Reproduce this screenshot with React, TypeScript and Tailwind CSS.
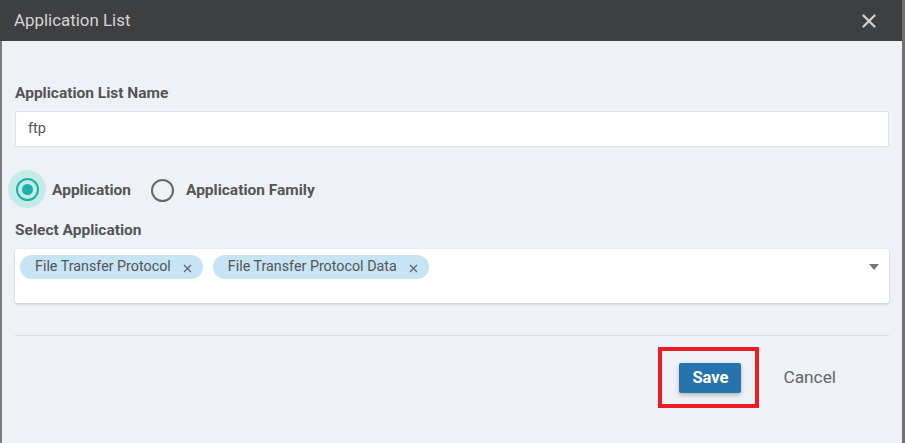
import { X } from "lucide-react";

const chips = ["File Transfer Protocol", "File Transfer Protocol Data"];

function Chip({ label }: { label: string }) {
  return (
    <span className="flex h-[24px] items-center rounded-full bg-[#c7e4f4] pl-[15px] pr-[11px] text-[14.3px] text-[#555]">
      {label}
      <svg width="9" height="9" viewBox="0 0 9 9" className="ml-[12px] mt-[2px]">
        <path d="M1 1L8 8M8 1L1 8" stroke="#666" strokeWidth="1.3" />
      </svg>
    </span>
  );
}

export default function App() {
  return (
    <div className="flex h-[443px] w-[905px] overflow-hidden font-['Roboto','Liberation_Sans',sans-serif]">
      <div className="flex flex-1 flex-col">
        {/* header */}
        <div className="flex h-[41px] items-center justify-between bg-[#3e3f41] pl-[14px] pr-[22px]">
          <span className="text-[16.9px] text-[#d4d4d4]">Application List</span>
          <X size={22} strokeWidth={2.6} className="text-[#cfcfcf]" />
        </div>

        {/* body */}
        <div className="flex-1 border-l-2 border-[#7b7b7b] bg-[#eef1f6] pl-[13px] pr-[13px] pt-[42px]">
          <div className="h-[20px] text-[15.5px] leading-[20px] font-bold text-[#555]">Application List Name</div>
          <div className="mt-[8px] flex h-[36px] items-center rounded-[2px] border border-[#dde0e4] bg-white pl-[12px] text-[14.5px] text-[#555]">
            ftp
          </div>

          {/* radios */}
          <div className="ml-[-7px] mt-[23px] flex h-[38px] items-center">
            <div className="flex h-[38px] w-[38px] items-center justify-center rounded-full bg-[#c5ebe8]">
              <div className="flex h-[23px] w-[23px] items-center justify-center rounded-full border-2 border-[#1bb1a5]">
                <div className="h-[11px] w-[11px] rounded-full bg-[#1bb1a5]" />
              </div>
            </div>
            <span className="ml-[6px] pt-[3px] text-[15.5px] font-bold text-[#555]">Application</span>
            <div className="ml-[20px] mt-[2px] h-[23px] w-[23px] rounded-full border-2 border-[#666]" />
            <span className="ml-[12px] pt-[3px] text-[15.5px] font-bold text-[#555]">Application Family</span>
          </div>

          <div className="mt-[12px] h-[20px] text-[15.5px] leading-[20px] font-bold text-[#555]">Select Application</div>
          <div className="mt-[9px] flex h-[54px] items-start justify-between rounded-[2px] bg-white pl-[5px] pr-[10px] pt-[6px] shadow-[0_1px_3px_rgba(0,0,0,0.18)]">
            <div className="flex gap-[10px]">
              {chips.map((c) => (
                <Chip key={c} label={c} />
              ))}
            </div>
            <svg width="10" height="6" viewBox="0 0 10 6" className="mt-[9px]">
              <path d="M0 0H10L5 6Z" fill="#777" />
            </svg>
          </div>

          <div className="mt-[32px] h-px bg-[#d9dce1]" />

          {/* footer */}
          <div className="mt-[11px] flex items-center justify-end pr-[53px]">
            <div className="h-[61px] w-[101px] border-4 border-[#ed1c24] pl-[17px] pt-[12px]">
              <button className="h-[30px] w-[62px] rounded-[2px] bg-[#2773ad] text-[16.5px] font-bold text-white shadow-[0_2px_4px_rgba(0,0,0,0.25)]">
                Save
              </button>
            </div>
            <span className="ml-[24px] text-[17.3px] text-[#666]">Cancel</span>
          </div>
        </div>
      </div>
      <div className="w-[3px] bg-[#727272]" />
    </div>
  );
}
